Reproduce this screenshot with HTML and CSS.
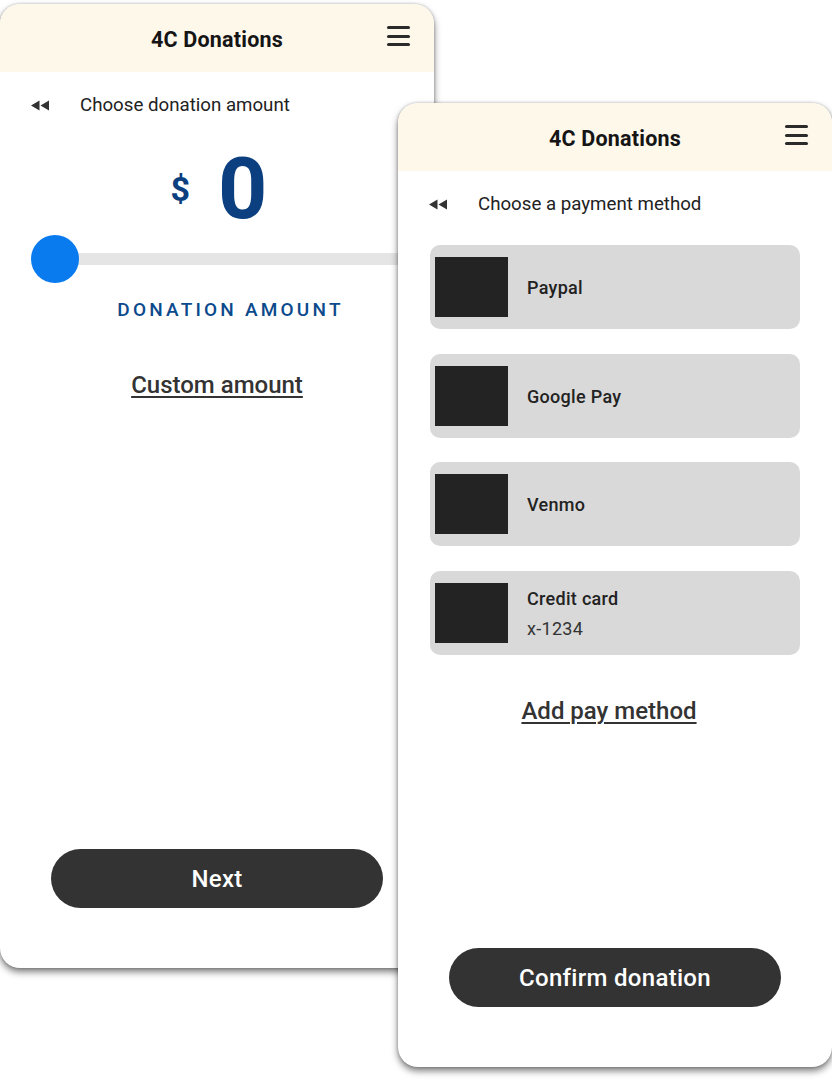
FILE: index.html
```html
<!DOCTYPE html>
<html lang="en">
<head>
<meta charset="utf-8">
<title>4C Donations</title>
<link rel="stylesheet" href="styles.css">
</head>
<body>
<div class="stage">
  <section class="card card-amount">
    <header class="bar">
      <span></span>
      <h1 class="title">4C Donations</h1>
      <span class="burger"><i></i><i></i><i></i></span>
    </header>
    <div class="crumb">
      <svg class="back" width="19" height="11" viewBox="0 0 19 11"><path d="M0 5.5 L8.5 0.5 V10.5 Z M9.5 5.5 L18 0.5 V10.5 Z" fill="#333"/></svg>
      <span>Choose donation amount</span>
    </div>
    <div class="amount">
      <span class="dollar">$</span>
      <span class="value">0</span>
    </div>
    <div class="slider">
      <div class="track"></div>
      <div class="thumb"></div>
    </div>
    <div class="caption">DONATION AMOUNT</div>
    <a class="link">Custom amount</a>
    <button class="cta">Next</button>
  </section>

  <section class="card card-pay">
    <header class="bar">
      <span></span>
      <h1 class="title">4C Donations</h1>
      <span class="burger"><i></i><i></i><i></i></span>
    </header>
    <div class="crumb">
      <svg class="back" width="19" height="11" viewBox="0 0 19 11"><path d="M0 5.5 L8.5 0.5 V10.5 Z M9.5 5.5 L18 0.5 V10.5 Z" fill="#333"/></svg>
      <span>Choose a payment method</span>
    </div>
    <ul class="methods">
      <li class="method"><span class="logo"></span><span class="label">Paypal</span></li>
      <li class="method"><span class="logo"></span><span class="label">Google Pay</span></li>
      <li class="method"><span class="logo"></span><span class="label">Venmo</span></li>
      <li class="method"><span class="logo"></span><span class="label">Credit card<small>x-1234</small></span></li>
    </ul>
    <a class="link link-add">Add pay method</a>
    <button class="cta">Confirm donation</button>
  </section>
</div>
</body>
</html>
```

FILE: styles.css
```css
* { box-sizing: border-box; }
html, body { margin: 0; padding: 0; background: #fff; }
body { font-family: Roboto, "Noto Sans", "Liberation Sans", sans-serif; color: #222; width: 832px; height: 1080px; overflow: hidden; }

.stage { display: flex; align-items: flex-start; }

.card {
  position: relative;
  width: 434px;
  height: 964px;
  background: #fff;
  border-radius: 20px;
  box-shadow: 0 4px 7px rgba(0,0,0,0.5), 0 0 3px rgba(0,0,0,0.25);
  display: flex;
  flex-direction: column;
  overflow: hidden;
  flex: none;
}
.card-amount { margin-top: 4px; }
.card-pay { margin-left: -36px; margin-top: 103px; }

.bar {
  height: 68px;
  background: #fef8eb;
  display: grid;
  grid-template-columns: 1fr auto 1fr;
  align-items: center;
  padding: 0 24px;
}
.title { margin: 3px 0 0; font-size: 21.5px; font-weight: 700; color: #151515; letter-spacing: 0.2px; }
.burger { justify-self: end; display: flex; flex-direction: column; gap: 5.5px; width: 23px; margin-top: -4px; }
.burger i { display: block; height: 3px; background: #2b2b2b; border-radius: 2px; }

.crumb { display: flex; align-items: center; margin: 23px 0 0 31px; height: 20px; font-size: 18.7px; color: #222; }
.back { margin-right: 30px; }

.amount { display: flex; align-items: center; justify-content: center; margin-top: 31px; height: 86px; color: #0b3f80; font-weight: 700; }
.dollar { font-size: 34px; margin-right: 28px; margin-left: 4px; margin-top: 0; }
.value { font-size: 86px; line-height: 86px; }

.slider { position: relative; height: 48px; margin: 3px 0 0 31px; }
.track { position: absolute; left: 24px; right: 0; top: 18px; height: 12px; background: #e5e5e5; }
.thumb { position: absolute; left: 0; top: 0; width: 48px; height: 48px; border-radius: 50%; background: #0a7bef; }

.caption { margin: 16px 0 0 27px; text-align: center; font-size: 19px; line-height: 22px; font-weight: 500; letter-spacing: 3.2px; color: #0b4a8c; }

.link { align-self: center; margin-top: 51px; font-size: 24px; line-height: 26px; font-weight: 500; color: #333; text-decoration: underline; text-underline-offset: 3px; text-decoration-thickness: 1.5px; }
.link-add { margin-top: 43px; margin-right: 12px; }

.cta {
  margin: auto auto 60px;
  width: 332px;
  height: 59px;
  border: 0;
  border-radius: 30px;
  background: #333;
  color: #fff;
  font-family: inherit;
  font-size: 24px;
  font-weight: 500;
  letter-spacing: 0.3px;
}

.methods { list-style: none; margin: 31px 0 0 32px; padding: 0; width: 370px; display: flex; flex-direction: column; gap: 24.7px; }
.method { height: 84px; background: #d9d9d9; border-radius: 10px; display: flex; align-items: center; padding-left: 5px; }
.logo { width: 73px; height: 60px; background: #232323; flex: none; }
.label { margin: 1px 0 0 19px; font-size: 18px; font-weight: 500; color: #222; display: flex; flex-direction: column; gap: 9px; letter-spacing: 0.3px; }
.label small { font-size: 18px; font-weight: 400; color: #333; }
```
